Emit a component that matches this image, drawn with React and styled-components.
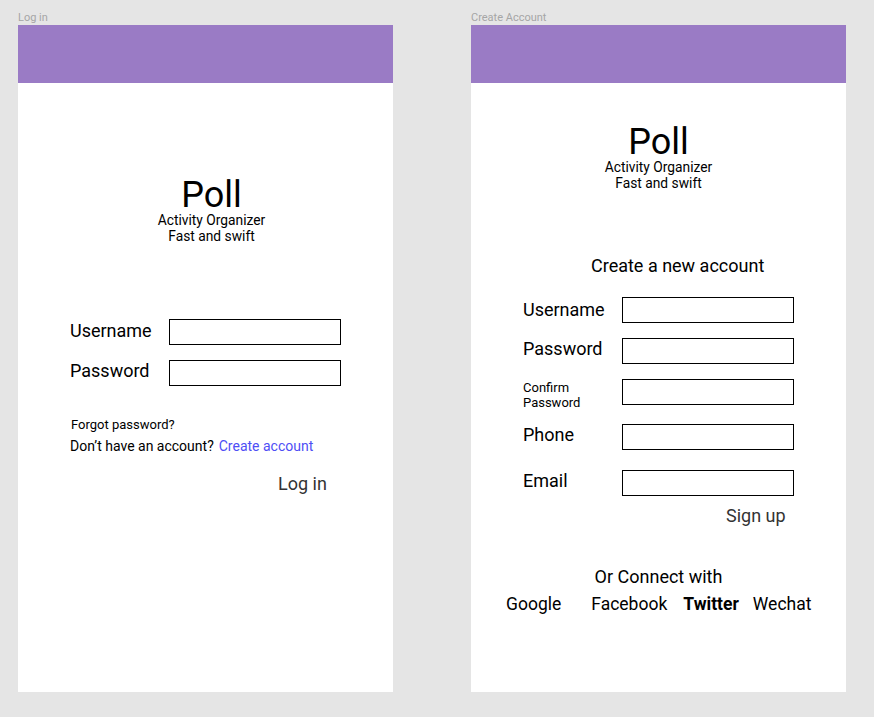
import styled, { createGlobalStyle } from "styled-components";

const GlobalStyle = createGlobalStyle`
  html, body {
    margin: 0;
    padding: 0;
    background: #e5e5e5;
  }
  body {
    font-family: Roboto, "Liberation Sans", Arial, sans-serif;
    color: #000;
  }
`;

const Canvas = styled.div`
  box-sizing: border-box;
  width: 874px;
  height: 717px;
  overflow: hidden;
  padding: 10px 0 0 18px;
  display: flex;
  gap: 78px;
`;

const FrameColumn = styled.div`
  display: flex;
  flex-direction: column;
`;

const FrameLabel = styled.div`
  font-size: 11px;
  line-height: 15px;
  color: #a6a6a6;
`;

const Frame = styled.div`
  width: 375px;
  height: 667px;
  background: #fff;
  display: flex;
  flex-direction: column;
`;

const Header = styled.div`
  height: 58px;
  background: #9a7bc5;
  flex-shrink: 0;
`;

const Brand = styled.div`
  margin-top: ${(p) => p.$top}px;
  padding-left: ${(p) => p.$shift || 0}px;
  display: flex;
  flex-direction: column;
  align-items: center;
`;

const Logo = styled.div`
  font-size: 36px;
  line-height: 35px;
`;

const Tagline = styled.div`
  font-size: 13.8px;
  line-height: 15.5px;
`;

const Heading = styled.div`
  margin-top: ${(p) => p.$top}px;
  padding-left: 120px;
  font-size: 18px;
  line-height: 22px;
`;

const Form = styled.div`
  margin-top: ${(p) => p.$top}px;
  padding-left: 52px;
  display: flex;
  flex-direction: column;
`;

const Row = styled.div`
  margin-top: ${(p) => p.$gap || 0}px;
  height: 26px;
  display: flex;
  align-items: flex-start;
`;

const Label = styled.div`
  width: 99px;
  padding-top: ${(p) => p.$pad || 0}px;
  font-size: ${(p) => (p.$small ? 13 : 18)}px;
  line-height: ${(p) => (p.$small ? "15.5px" : "22px")};
`;

const Field = styled.div`
  box-sizing: border-box;
  width: 172px;
  height: 26px;
  border: 1.5px solid #000;
`;

const Note = styled.div`
  margin-top: ${(p) => p.$top}px;
  padding-left: ${(p) => p.$left}px;
  font-size: ${(p) => p.$size}px;
  line-height: ${(p) => p.$line}px;
  white-space: nowrap;
`;

const Link = styled.span`
  color: #4e4ef5;
  margin-left: 5px;
`;

const Action = styled.div`
  margin-top: ${(p) => p.$top}px;
  padding-left: ${(p) => p.$left}px;
  font-size: 18px;
  line-height: 22px;
  color: #333;
`;

const ConnectTitle = styled.div`
  margin-top: 38.5px;
  text-align: center;
  font-size: 18px;
  line-height: 22px;
`;

const SocialRow = styled.div`
  margin-top: 5px;
  padding-left: 35px;
  display: flex;
  font-size: 17.5px;
  line-height: 22px;
`;

const Social = styled.div`
  margin-left: ${(p) => p.$gap || 0}px;
  font-weight: ${(p) => (p.$bold ? 700 : 400)};
`;

const BrandBlock = ({ top, shift }) => (
  <Brand $top={top} $shift={shift}>
    <Logo>Poll</Logo>
    <Tagline>Activity Organizer</Tagline>
    <Tagline>Fast and swift</Tagline>
  </Brand>
);

const App = () => {
  return (
    <>
      <GlobalStyle />
      <Canvas>
        <FrameColumn>
          <FrameLabel>Log in</FrameLabel>
          <Frame>
            <Header />
            <BrandBlock top={95} shift={12} />
            <Form $top={75}>
              <Row>
                <Label $pad={1}>Username</Label>
                <Field />
              </Row>
              <Row $gap={15}>
                <Label>Password</Label>
                <Field />
              </Row>
            </Form>
            <Note $top={31} $left={53} $size={13} $line={16}>
              Forgot password?
            </Note>
            <Note $top={4} $left={52} $size={14} $line={18}>
              Don’t have an account?<Link>Create account</Link>
            </Note>
            <Action $top={18} $left={260}>
              Log in
            </Action>
          </Frame>
        </FrameColumn>

        <FrameColumn>
          <FrameLabel>Create Account</FrameLabel>
          <Frame>
            <Header />
            <BrandBlock top={42} />
            <Heading $top={64}>Create a new account</Heading>
            <Form $top={19.5}>
              <Row>
                <Label $pad={2}>Username</Label>
                <Field />
              </Row>
              <Row $gap={15}>
                <Label>Password</Label>
                <Field />
              </Row>
              <Row $gap={15}>
                <Label $small $pad={1}>
                  Confirm
                  <br />
                  Password
                </Label>
                <Field />
              </Row>
              <Row $gap={19}>
                <Label>Phone</Label>
                <Field />
              </Row>
              <Row $gap={20}>
                <Label>Email</Label>
                <Field />
              </Row>
            </Form>
            <Action $top={9.5} $left={255}>
              Sign up
            </Action>
            <ConnectTitle>Or Connect with</ConnectTitle>
            <SocialRow>
              <Social>Google</Social>
              <Social $gap={30}>Facebook</Social>
              <Social $gap={16} $bold>
                Twitter
              </Social>
              <Social $gap={14}>Wechat</Social>
            </SocialRow>
          </Frame>
        </FrameColumn>
      </Canvas>
    </>
  );
};

export default App;
